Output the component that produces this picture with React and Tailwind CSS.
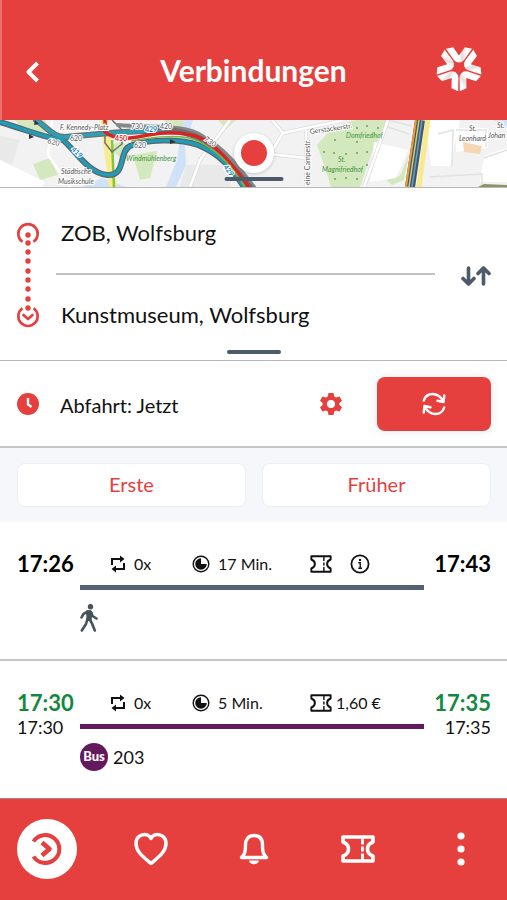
import { useState } from "react";

const STATIONS = ["ZOB, Wolfsburg", "Kunstmuseum, Wolfsburg"];

const CONNECTIONS = [
  {
    id: "walk",
    departure: "17:26",
    arrival: "17:43",
    changes: "0x",
    duration: "17 Min.",
  },
  {
    id: "bus-203",
    departure: "17:30",
    arrival: "17:35",
    plannedDeparture: "17:30",
    plannedArrival: "17:35",
    changes: "0x",
    duration: "5 Min.",
    price: "1,60 €",
    line: "203",
  },
];

function Logo() {
  return (
    <svg viewBox="-24 -22 48 48" className="h-12 w-12" aria-hidden="true">
      <defs>
        <linearGradient id="logoFill" x1="0" x2="1" y1="0" y2="0">
          <stop offset="0" stopColor="#fff" />
          <stop offset="0.5" stopColor="#fff" />
          <stop offset="0.62" stopColor="#e3dcdc" />
          <stop offset="0.8" stopColor="#fff" />
        </linearGradient>
      </defs>
      {[0, 72, 144, 216, 288].map((angle) => (
        <path
          key={angle}
          transform={`rotate(${angle}) scale(1.05)`}
          fill="url(#logoFill)"
          d="M-12.4-18.4-5.6-19.8 0-11.800 5.6-19.8 12.4-18.4 4.8-7.6Q2.9-5.2 0-5.2T-4.8-7.6Z"
        />
      ))}
    </svg>
  );
}

function TicketIcon({ className, strokeWidth = 2 }) {
  return (
    <svg
      viewBox="0 0 34 28"
      className={className}
      fill="none"
      stroke="currentColor"
      strokeWidth={strokeWidth}
      strokeLinejoin="round"
      aria-hidden="true"
    >
      <path d="M2 2H32V7Q26.500 9 26.500 14T32 21V26H2V21Q7.500 19 7.500 14T2 7Z" />
      <path d="M21.500 3V9.500M21.500 11.500V16.500M21.500 18.500V25" strokeWidth={strokeWidth - 0.8} />
    </svg>
  );
}

function ChangesIcon() {
  return (
    <svg viewBox="0 0 16 18" className="h-[18px] w-4 shrink-0" aria-hidden="true">
      <g fill="none" stroke="currentColor" strokeWidth="2">
        <path d="M2 10V4H11M14 8V14H5" />
      </g>
      <path d="M10 0.500 14.500 4 10 7.500ZM6 10.500 1.500 14 6 17.500Z" fill="currentColor" />
    </svg>
  );
}

function DurationIcon() {
  return (
    <svg viewBox="0 0 18 18" className="h-[18px] w-[18px] shrink-0" aria-hidden="true">
      <circle cx="9" cy="9" r="7.800" fill="none" stroke="currentColor" strokeWidth="1.400" />
      <path d="M9 3.200V9H14.800A5.800 5.800 0 1 1 9 3.200Z" fill="currentColor" />
    </svg>
  );
}

function InfoIcon() {
  return (
    <svg viewBox="0 0 20 20" className="h-5 w-5" aria-hidden="true">
      <circle cx="10" cy="10" r="8.600" fill="none" stroke="currentColor" strokeWidth="1.800" />
      <circle cx="10" cy="6" r="1.200" fill="currentColor" />
      <path d="M8.300 8.800H10.200V14M8.300 14.200H12" fill="none" stroke="currentColor" strokeWidth="1.400" />
    </svg>
  );
}

function WalkIcon() {
  return (
    <svg viewBox="0 0 18 28" className="h-7 w-[18px] text-[#46525c]" aria-hidden="true">
      <circle cx="10.500" cy="2.700" r="2.700" fill="currentColor" />
      <path d="M6 6.500 10.500 6 12.500 8.500 11.500 16.500 6.500 16Z" fill="currentColor" />
      <g
        fill="none"
        stroke="currentColor"
        strokeWidth="2.600"
        strokeLinecap="round"
        strokeLinejoin="round"
      >
        <path d="M8 7.500 3.500 9.800 1.500 13.500M11 8 12.500 12 16.500 14.500" />
        <path d="M7.500 15 6 20 1.800 26.500M9.500 15 12 19.500 14.800 26.500" />
      </g>
    </svg>
  );
}

function MapPreview() {
  return (
    <svg
      viewBox="0 0 507 67"
      preserveAspectRatio="xMidYMid slice"
      className="block h-[67px] w-full bg-[#f2f2f2]"
      aria-label="Karte"
    >
      {/* parks, water and buildings */}
      <g fill="#d3e9bd">
        <path d="M14 0H45L50 12 30 14ZM33 44 50 38 58 55 40 60ZM106 27 122 21 129 29 120 37ZM133 35 157 31 150 58 140 60ZM164 0H188L180 13 167 8ZM218 0H236L226 9Z" />
        <path d="M332 8 355 0H387L371 35 360 67H331L323 42 317 25Z" />
        <path d="M386 60 400 56 409 34 404 60 392 65Z" />
      </g>
      <path d="M183 0H193L185 25 186 45 176 67H166L177 40Z" fill="#cfe2f8" />
      <path d="M82 67 102 58 126 67ZM493 0H507V7Z" fill="#cfe2f8" />
      <path d="M0 16 20 20 12 45 0 40ZM186 45H230V67H180Z" fill="#e9e9e9" />
      <path d="M0 40 45 62 42 67H0ZM374 22 408 30 396 58 370 62Z" fill="#fff" />
      <path d="M426 0H460L450 46H431ZM456 8H488V28L456 32ZM484 36 507 28V62H480Z" fill="#fff" />
      <path d="M463 22 482 26 480 34 464 32Z" fill="#f6d7b4" />
      <g fill="none" stroke="#e1e2e4" strokeWidth="1.500">
        <path d="M429 57 482 54V67M438 14 453 10 452 46M456 10H486V27M484 38 507 30M388 0 412 6M385 6 409 14" />
      </g>
      <g fill="none" stroke="#dadcde" strokeWidth="4">
        <path d="M230 0 200 40 190 67M272 0 283 13 345 0M283 13 270 34 306 38M306 10V67M388 0 364 67" />
      </g>
      <g fill="none" stroke="#fff" strokeWidth="2.500">
        <path d="M230 0 200 40 190 67M272 0 283 13 345 0M283 13 270 34 306 38M306 10V67M388 0 364 67M52 0 48 35 70 67" />
      </g>

      {/* roads */}
      <path d="M104 0 113 67" fill="none" stroke="#f8ec92" strokeWidth="8" />
      <path d="M112 20 114 67" fill="none" stroke="#86c63e" strokeWidth="2.500" />
      <path d="M105 0V23L112 32 122 24V10L112 0" fill="none" stroke="#6d6f6b" strokeWidth="1.500" />

      {/* bus lines */}
      <g fill="none" strokeLinejoin="round" strokeLinecap="round">
        <path
          d="M118 5C150 8 185 4 202 16C224 28 238 46 254 67"
          stroke="#858789"
          strokeWidth="4"
        />
        <path
          d="M36 0C48 8 53 17 65 17L110 13C130 12 140 10 175 11C205 14 220 33 250 67"
          stroke="#6d7073"
          strokeWidth="6"
        />
        <path
          d="M0 2C30 11 45 18 63 20C75 30 88 53 107 55C127 56 118 32 130 26C145 20 178 18 198 25C220 34 232 48 244 67"
          stroke="#57676d"
          strokeWidth="6"
        />
        <path
          d="M36 0C48 8 53 17 65 17L110 13C130 12 140 10 175 13"
          stroke="#2da1b4"
          strokeWidth="3.500"
        />
        <path
          d="M0 2C30 11 45 18 63 20C75 30 88 53 107 55C127 56 118 32 130 26C145 20 178 18 198 25C220 34 232 48 244 67"
          stroke="#229bb7"
          strokeWidth="3.500"
        />
        <path
          d="M105 0V12C117 22 132 18 148 15C175 10 195 14 206 21C222 31 236 50 249 67"
          stroke="#d92426"
          strokeWidth="3.500"
        />
        <path
          d="M132 21C155 16 185 14 200 22C220 32 233 48 245 67"
          stroke="#77b843"
          strokeWidth="1.500"
        />
      </g>
      <g fill="none">
        <path d="M420 0 410 67" stroke="#41586d" strokeWidth="10" />
        <path d="M419 0 409 67" stroke="#d2cf70" strokeWidth="1.500" />
        <path d="M422 0 412 67" stroke="#6e9dbd" strokeWidth="1.500" />
        <path d="M416 0 406 67" stroke="#f29a35" strokeWidth="2" />
        <path d="M428 0 419 67" stroke="#f6ea8c" strokeWidth="5" />
      </g>
      <path d="M29 14 34 17 29 19ZM170 19 176 22 170 24ZM35 0 39 4 34 5Z" fill="#333" />
      <path d="M478 67 484 64 507 65V67Z" fill="#8d9465" />

      {/* labels */}
      <g fontSize="7" fill="#555" stroke="#fff" strokeWidth="2" paintOrder="stroke">
        <g fontStyle="italic">
          <text x="60" y="10">F. Kennedy-Platz</text>
          <text x="61" y="54">Städtische</text>
          <text x="58" y="64">Musikschule</text>
          <text x="469" y="11">St.</text>
          <text x="459" y="21">Leonhard</text>
          <text x="497" y="8">St.</text>
          <text x="488" y="18">Johan</text>
        </g>
        <text x="310" y="14" transform="rotate(-8 310 14)">Gerstäckerstr.</text>
        <text x="310" y="65" transform="rotate(-90 310 65)">eine Campestr.</text>
        <text x="47" y="23" transform="rotate(14 47 23)">620</text>
        <text x="70" y="21">620</text>
        <text x="131" y="9">730</text>
        <text x="160" y="9">420</text>
        <text x="134" y="28">620</text>
        <text x="204" y="20" transform="rotate(35 204 20)">730</text>
      </g>
      <g fontSize="7" fontWeight="700" fill="#1684bd" stroke="#fff" strokeWidth="2" paintOrder="stroke">
        <text x="145" y="12">429</text>
        <text x="71" y="30" transform="rotate(43 71 30)">419</text>
        <text x="223" y="47" transform="rotate(52 223 47)">429</text>
      </g>
      <text x="115" y="21" fontSize="7" fontWeight="700" fill="#d92426" stroke="#fff" strokeWidth="2" paintOrder="stroke">
        450
      </text>
      <g fontSize="7" fontStyle="italic" fill="#3f9440">
        <text x="126" y="41">Windmühlenberg</text>
        <text x="346" y="18">Domfriedhof</text>
        <text x="338" y="42">St.</text>
        <text x="322" y="52">Magnifriedhof</text>
      </g>
      <g fill="#6f9d5f">
        {[
          [357, 8], [367, 6], [378, 8], [335, 20], [357, 22], [324, 32],
          [334, 33], [346, 34], [357, 33], [367, 32], [367, 45], [335, 59],
          [346, 58], [357, 59],
        ].map(([x, y]) => (
          <circle key={`${x}-${y}`} cx={x} cy={y} r="1" />
        ))}
      </g>
    </svg>
  );
}

function RouteMarker() {
  return (
    <svg viewBox="0 -2 24 110" className="h-[110px] w-6 shrink-0 text-[#e5403d]" aria-hidden="true">
      <g fill="none" stroke="currentColor" strokeWidth="2.600">
        <path d="M6.500 20.800A9.700 9.700 0 1 1 17.500 20.800" />
        <path d="M6.500 87.300A9.700 9.700 0 1 0 17.500 87.300" />
        <path d="M7.500 94 12 98 16.500 94" strokeLinecap="round" strokeLinejoin="round" />
      </g>
      <g fill="currentColor">
        {[14, 22, 31, 40, 50, 59, 68, 78, 87].map((y) => (
          <circle key={y} cx="12" cy={y} r="2.700" />
        ))}
      </g>
    </svg>
  );
}

function Connection({ connection }) {
  const { departure, arrival, plannedDeparture, plannedArrival, line, price } =
    connection;
  const timeColor = line ? "text-[#12893f]" : "text-black";

  return (
    <li className="flex border-b-2 border-[#c5c6c8] pt-[30px] pr-4 pl-[17px] last:border-b-0">
      <div className="w-[63px] shrink-0">
        <p className={`text-[22px] leading-6 font-bold ${timeColor}`}>{departure}</p>
        {plannedDeparture && <p className="text-lg leading-6">{plannedDeparture}</p>}
      </div>

      <div className="flex-1">
        <div className="grid h-6 grid-cols-[82fr_118fr_114fr] items-center pl-[30px] text-base whitespace-nowrap">
          <span className="flex items-center gap-2">
            <ChangesIcon />
            {connection.changes}
          </span>
          <span className="flex items-center gap-2">
            <DurationIcon />
            {connection.duration}
          </span>
          <span className="flex items-center gap-1">
            <TicketIcon className="h-[18px] w-[22px] shrink-0" strokeWidth={3} />
            {price || (
              <button type="button" aria-label="Info" className="ml-3.5">
                <InfoIcon />
              </button>
            )}
          </span>
        </div>
        <div className={`mt-[9px] h-[5px] ${line ? "bg-[#64195c]" : "bg-[#536170]"}`} />
        <div className="mt-[14px] mb-[27px] flex h-7 items-center gap-[5px]">
          {line ? (
            <>
              <span className="flex h-7 w-7 items-center justify-center rounded-full bg-[#64195c] text-[13px] font-black text-white">
                Bus
              </span>
              <span className="text-lg">{line}</span>
            </>
          ) : (
            <WalkIcon />
          )}
        </div>
      </div>

      <div className="w-[67px] shrink-0 text-right">
        <p className={`text-[22px] leading-6 font-bold ${timeColor}`}>{arrival}</p>
        {plannedArrival && <p className="text-lg leading-6">{plannedArrival}</p>}
      </div>
    </li>
  );
}

const NAV_ITEMS = [
  {
    id: "routes",
    label: "Verbindungen",
    icon: (
      <svg viewBox="0 0 32 34" className="h-[34px] w-8" fill="none" stroke="currentColor" strokeWidth="4">
        <path d="M2.500 9.500A14 14 0 1 1 2.500 24.500" />
        <path d="M11 10.500 18.500 17 11 23.500" strokeWidth="4.500" strokeLinejoin="round" />
      </svg>
    ),
  },
  {
    id: "favorites",
    label: "Favoriten",
    icon: (
      <svg viewBox="0 0 34 34" className="h-[34px] w-[34px]" fill="none" stroke="currentColor" strokeWidth="3.500" strokeLinejoin="round">
        <path d="M17 31.500C10 25.500 2 20 2 11.500C2 2 13.500-.500 17 6.500C20.500-.500 32 2 32 11.500C32 20 24 25.500 17 31.500Z" />
      </svg>
    ),
  },
  {
    id: "alerts",
    label: "Meldungen",
    icon: (
      <svg viewBox="0 0 30 32" className="h-8 w-[30px]" aria-hidden="true">
        <path
          d="M2.500 24.500C6 21 6.500 19 6.500 12C6.500 5.500 10 2.500 15 2.500S23.500 5.500 23.500 12C23.500 19 24 21 27.500 24.500Z"
          fill="none"
          stroke="currentColor"
          strokeWidth="3.400"
          strokeLinejoin="round"
        />
        <path d="M10 27.500H20C19 32.500 11 32.500 10 27.500Z" fill="currentColor" />
      </svg>
    ),
  },
  {
    id: "tickets",
    label: "Tickets",
    icon: <TicketIcon className="h-7 w-[34px]" strokeWidth={3.6} />,
  },
  {
    id: "more",
    label: "Mehr",
    icon: (
      <svg viewBox="0 0 8 34" className="h-[34px] w-2" fill="currentColor">
        <circle cx="4" cy="4" r="3.600" />
        <circle cx="4" cy="17" r="3.600" />
        <circle cx="4" cy="30" r="3.600" />
      </svg>
    ),
  },
];

export default function App() {
  const [stations, setStations] = useState(STATIONS);
  const [activeTab, setActiveTab] = useState("routes");

  return (
    <div className="flex min-h-screen flex-col bg-white font-[Lato,sans-serif] text-[#111]">
      <header className="flex h-[120px] items-center justify-between border-l-2 border-[#ed706e] bg-[#e5403d] pt-5 pr-6 pl-[22px] text-white">
        <button type="button" aria-label="Zurück" className="flex w-12 pt-4 pb-3">
          <svg viewBox="0 0 16 22" className="h-[22px] w-4" fill="none" stroke="currentColor" strokeWidth="4">
            <path d="M13.500 2 4.500 11 13.500 20" strokeLinejoin="round" />
          </svg>
        </button>
        <h1 className="text-[30px] leading-9 font-bold">Verbindungen</h1>
        <Logo />
      </header>

      <div className="relative border-b border-[#b5b7b9]">
        <MapPreview />
        <span className="absolute bottom-1.5 left-1/2 h-1 w-[59px] -translate-x-1/2 rounded-full bg-[#4c5b69]" />
        <span className="absolute top-4 left-1/2 h-[34px] w-[34px] -translate-x-1/2 rounded-full border-4 border-white bg-[#e5403d] shadow-[0_1px_4px_2px_rgba(0,0,0,0.3)] ring-3 ring-white" />
      </div>

      <section className="border-b border-[#b5b7b9] pt-[31px] pb-1.5">
        <div className="flex items-center px-4">
          <RouteMarker />
          <div className="ml-4 flex-1 text-[22px] leading-7">
            <button type="button" className="block w-full pl-[5px] text-left">
              {stations[0]}
            </button>
            <hr className="my-[26px] border-t-2 border-[#bfc1c3]" />
            <button type="button" className="block w-full pl-[5px] text-left">
              {stations[1]}
            </button>
          </div>
          <button
            type="button"
            aria-label="Richtung tauschen"
            className="ml-[26px] pt-1 text-[#4c5b69]"
            onClick={() => setStations([stations[1], stations[0]])}
          >
            <svg viewBox="0 0 30 20" className="h-5 w-[30px]" fill="none" stroke="currentColor" strokeWidth="3.600" strokeLinecap="round" strokeLinejoin="round">
              <path d="M7.500 2V18M2 12.500 7.500 18 13 12.500M22.500 18V2M17 7.500 22.500 2 28 7.500" />
            </svg>
          </button>
        </div>
        <div className="mx-auto mt-[21px] h-1 w-[54px] rounded-full bg-[#4c5b69]" />
      </section>

      <section className="flex h-[87px] items-center border-b-2 border-[#c5c6c8] px-4">
        <svg viewBox="0 0 22 22" className="mx-px h-[22px] w-[22px] text-[#e5403d]" aria-hidden="true">
          <circle cx="11" cy="11" r="11" fill="currentColor" />
          <path d="M11 5V11.500L14.500 14" fill="none" stroke="#fff" strokeWidth="2.400" />
        </svg>
        <button type="button" className="ml-5 flex-1 pt-0.5 text-left text-xl">
          Abfahrt: Jetzt
        </button>
        <button type="button" aria-label="Einstellungen" className="mr-[34px] text-[#e5403d]">
          <svg viewBox="0 0 24 24" className="h-6 w-6">
            <path
              fill="currentColor"
              fillRule="evenodd"
              d="M9.500 1H14.500L15.200 4.400 17.200 5.600 20.500 4.500 23 8.800 20.400 11.100V13L23 15.200 20.500 19.500 17.200 18.400 15.200 19.600 14.500 23H9.500L8.800 19.600 6.800 18.400 3.500 19.500 1 15.200 3.600 12.900V11.100L1 8.800 3.500 4.500 6.800 5.600 8.800 4.400ZM12 8A4 4 0 1 0 12 16A4 4 0 0 0 12 8Z"
            />
          </svg>
        </button>
        <button
          type="button"
          aria-label="Aktualisieren"
          className="flex h-[54px] w-[114px] items-center justify-center rounded-lg bg-[#e5403d] text-white shadow-[0_0_10px_rgba(83,97,112,0.15)]"
        >
          <svg viewBox="0 0 24 26" className="h-[26px] w-6" fill="none" stroke="currentColor" strokeWidth="2.400" strokeLinecap="round" strokeLinejoin="round">
            <path d="M1.800 9.500C4.500 1 16 .500 21 10M22.300 4.500 21.500 11 15.500 9.800" />
            <path d="M22.200 16.500C19.500 25 8 25.500 3 16M1.700 21.500 2.500 15 8.500 16.200" />
          </svg>
        </button>
      </section>

      <div className="grid grid-cols-2 gap-4 bg-[#f5f7fb] py-[15px] pr-4 pl-[17px]">
        {["Erste", "Früher"].map((label) => (
          <button
            key={label}
            type="button"
            className="h-11 rounded-lg border border-[#edeff3] bg-white pb-0.5 text-xl text-[#e5403d]"
          >
            {label}
          </button>
        ))}
      </div>

      <ul className="flex-1">
        {CONNECTIONS.map((connection) => (
          <Connection key={connection.id} connection={connection} />
        ))}
      </ul>

      <nav className="flex h-[102px] items-center justify-between border-t border-[#b87f7e] bg-[#e5403d] pr-4 pb-0.5 pl-[17px] text-white">
        {NAV_ITEMS.map((item) => (
          <button
            key={item.id}
            type="button"
            aria-label={item.label}
            onClick={() => setActiveTab(item.id)}
            className={`flex h-[60px] w-[60px] items-center justify-center rounded-full ${
              activeTab === item.id ? "bg-white text-[#e5403d]" : ""
            }`}
          >
            {item.icon}
          </button>
        ))}
      </nav>
    </div>
  );
}
